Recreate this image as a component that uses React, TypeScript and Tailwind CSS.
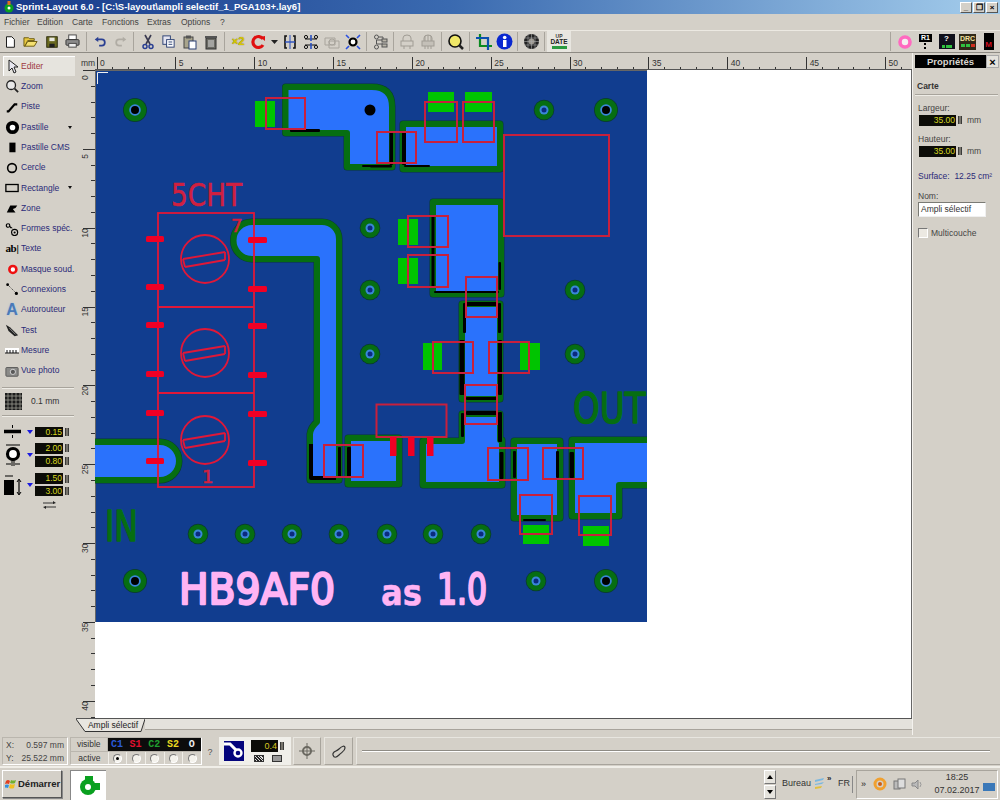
import React from "react";

const GREEN = "#066e12";
const BLUE = "#2a72fc";
const RED = "#c8203c";

function S({ children, w = 16, h = 16, vb = "0 0 16 16" }: { children: React.ReactNode; w?: number; h?: number; vb?: string }) {
  return (
    <svg width={w} height={h} viewBox={vb} className="block shrink-0">
      {children}
    </svg>
  );
}

function Sep({ w = 6 }: { w?: number }) {
  return (
    <div className="flex justify-center shrink-0" style={{ width: w }}>
      <div className="w-[2px] h-[19px] my-[1px] border-l border-[#a8a49c] border-r-white" />
    </div>
  );
}

function T({ w = 21, children, cls = "" }: { w?: number; children: React.ReactNode; cls?: string }) {
  return (
    <div className={"h-[21px] flex items-center justify-center shrink-0 " + cls} style={{ width: w }}>
      {children}
    </div>
  );
}

function Toolbar() {
  return (
    <div className="h-[23px] flex items-center bg-[#d4d0c8] border-t border-[#ece9e2] border-b border-b-[#8e8b84]">
      <T w={19}><S w={14} h={14}><path d="M4 2h6l3 3v9H4z" fill="#fff" stroke="#000" /></S></T>
      <T w={22}><S w={15} h={15}><path d="M1 13V4h5l1 1h5v2H5l-3 6z" fill="#e8c840" stroke="#6a5a10" /><path d="M2 13l3-5h10l-3 5z" fill="#f4e070" stroke="#6a5a10" /></S></T>
      <T><S w={14} h={14}><rect x="2" y="2" width="12" height="12" fill="#6a6a20" stroke="#202000" /><rect x="5" y="3" width="6" height="4" fill="#e8e8e0" /><rect x="5" y="10" width="6" height="4" fill="#202020" /></S></T>
      <T><S w={15} h={15}><rect x="4" y="1" width="8" height="5" fill="#fff" stroke="#444" /><rect x="1" y="6" width="14" height="6" rx="1" fill="#8a8a8a" stroke="#333" /><rect x="4" y="10" width="8" height="4" fill="#eee" stroke="#444" /></S></T>
      <Sep w={7} />
      <T w={20}><S w={14} h={14}><path d="M5 5h5a3 3 0 0 1 0 7H7" fill="none" stroke="#2a3f92" strokeWidth="2" /><path d="M6 2L2 5l4 3z" fill="#2a3f92" /></S></T>
      <T><S w={14} h={14}><path d="M11 5H6a3 3 0 0 0 0 7h3" fill="none" stroke="#b0aca4" strokeWidth="2" /><path d="M10 2l4 3-4 3z" fill="#b0aca4" /></S></T>
      <Sep />
      <T><S><path d="M5 1l5 9M11 1L6 10" stroke="#3a3a50" strokeWidth="1.6" /><circle cx="5" cy="12.5" r="2" fill="none" stroke="#2a3f92" strokeWidth="1.5" /><circle cx="11" cy="12.5" r="2" fill="none" stroke="#2a3f92" strokeWidth="1.5" /></S></T>
      <T><S w={15} h={15}><rect x="2" y="2" width="8" height="9" fill="#e4e4f0" stroke="#2a3f72" /><rect x="6" y="6" width="8" height="8" fill="#fff" stroke="#2a3f72" /><path d="M8 8.500h4M8 11h4" stroke="#2a3f72" /></S></T>
      <T><S><rect x="2" y="3" width="9" height="11" fill="#a8a48c" stroke="#444" /><rect x="4" y="1.500" width="5" height="3" fill="#555" /><rect x="7" y="7" width="7" height="8" fill="#fff" stroke="#2a3f72" /></S></T>
      <T><S><rect x="3" y="4" width="10" height="11" fill="#6a6a64" stroke="#333" /><rect x="2" y="2" width="12" height="2" fill="#555" /><path d="M6 6v7M8 6v7M10 6v7" stroke="#ddd" /></S></T>
      <Sep w={7} />
      <T w={20}><span className="text-[11px] font-bold text-[#d8c800] leading-none [text-shadow:0_0_1px_#706000]">×2</span></T>
      <T><S><path d="M12 5a5.500 5.500 0 1 0 0 6" fill="none" stroke="#e01010" strokeWidth="3.200" /><path d="M9 3l5-1v5z" fill="#e01010" /></S></T>
      <T w={10}><S w={7} h={4} vb="0 0 7 4"><path d="M0 0h7L3.500 4z" fill="#222" /></S></T>
      <T><S><path d="M5 2H3v12h2M11 2h2v12h-2" fill="none" stroke="#111" strokeWidth="1.600" /><path d="M8 1v14" stroke="#2a50c0" /><path d="M3 8h10" stroke="#2a50c0" strokeWidth="1.400" /></S></T>
      <T><S><path d="M2 5h12M2 11h12" stroke="#111" strokeWidth="1.200" /><path d="M8 1v6M8 9v6" stroke="#2a50c0" strokeWidth="1.600" /><circle cx="3" cy="3" r="1.600" fill="none" stroke="#111" /><circle cx="13" cy="3" r="1.600" fill="none" stroke="#111" /><circle cx="3" cy="13" r="1.600" fill="none" stroke="#111" /><circle cx="13" cy="13" r="1.600" fill="none" stroke="#111" /></S></T>
      <T><S><path d="M1 4h10v7H1zM5 7h10v7H5z" fill="none" stroke="#a8a49c" /><circle cx="8" cy="8" r="3" fill="none" stroke="#a8a49c" /></S></T>
      <T><S><circle cx="8" cy="8" r="3.500" fill="#fff" stroke="#000" strokeWidth="2.200" /><path d="M1 1l3 3M15 1l-3 3M1 15l3-3M15 15l-3-3" stroke="#2a50e0" strokeWidth="1.600" /></S></T>
      <Sep w={7} />
      <T><S><circle cx="3.500" cy="3" r="2" fill="none" stroke="#555" /><circle cx="3.500" cy="13" r="2" fill="none" stroke="#555" /><path d="M6 3h4v3H3.500v4H10" fill="none" stroke="#555" /><rect x="9" y="5" width="5" height="3" fill="#b8b4a8" stroke="#555" /><rect x="9" y="10" width="5" height="3" fill="#b8b4a8" stroke="#555" /></S></T>
      <Sep />
      <T w={20}><S><path d="M4 7V4a4 3 0 0 1 8 0v3" fill="none" stroke="#a09c94" /><rect x="2" y="7" width="12" height="5" fill="none" stroke="#a09c94" /><path d="M5 12v3M11 12v3" stroke="#a09c94" /></S></T>
      <T><S><path d="M4 7V4a4 3 0 0 1 8 0v3" fill="none" stroke="#a09c94" /><rect x="2" y="7" width="12" height="5" fill="#c4c0b8" stroke="#a09c94" /><path d="M5 12v3M8 12v3M11 12v3M5 2v5M8 1v6M11 2v5" stroke="#a09c94" /></S></T>
      <Sep w={7} />
      <T w={22}><S w={18} h={18} vb="0 0 18 18"><circle cx="8" cy="8" r="6" fill="#f0e868" stroke="#111" strokeWidth="1.600" /><path d="M12 12l4 4" stroke="#222" strokeWidth="2.500" /></S></T>
      <Sep />
      <T><S w={18} h={18} vb="0 0 18 18"><path d="M5 1v12h12" fill="none" stroke="#0a8a20" strokeWidth="2.200" /><path d="M1 5h12v12" fill="none" stroke="#0a50b0" strokeWidth="2.200" /></S></T>
      <T><S w={17} h={17} vb="0 0 17 17"><circle cx="8.500" cy="8.500" r="8" fill="#0a28d0" /><rect x="7" y="7" width="3.500" height="7" fill="#fff" /><circle cx="8.700" cy="4.500" r="1.800" fill="#fff" /></S></T>
      <Sep />
      <T><S w={17} h={17} vb="0 0 17 17"><circle cx="8.500" cy="8.500" r="7.500" fill="#222" /><circle cx="8.500" cy="8.500" r="3" fill="#9c9890" /><path d="M1 5h15M1 8.500h15M1 12h15M5 1v15M8.500 1v15M12 1v15" stroke="#aaa" strokeWidth=".6" /></S></T>
      <Sep w={5} />
      <div className="w-[24px] h-[21px] bg-[#e8e6e0] flex flex-col items-center justify-center shrink-0 leading-none">
        <span className="text-[5px] font-bold text-[#333]">UP</span>
        <span className="text-[6.5px] font-bold text-[#222]">DATE</span>
        <span className="w-[15px] h-[3px] mt-[1px] bg-[#2a9a40]" />
      </div>
      <div className="ml-auto" />
      <Sep />
      <T><S w={14} h={14} vb="0 0 14 14"><circle cx="7" cy="7" r="5" fill="#f4f0f0" stroke="#ff6ac0" strokeWidth="3.600" /></S></T>
      <T>
        <div className="flex flex-col items-center">
          <span className="bg-black text-white text-[7px] font-bold leading-[8px] px-[2px]">R1</span>
          <span className="w-[2px] h-[6px] border-y-2 border-black mt-[1px]" />
        </div>
      </T>
      <T>
        <div className="w-[16px] h-[15px] bg-[#10101c] flex flex-col items-center leading-none">
          <span className="text-white text-[8px] font-bold leading-[10px]">?</span>
          <span className="flex gap-[1px] items-center mt-[1px]"><span className="w-[3px] h-[3px] bg-[#30c040]" /><span className="w-[6px] h-[3px] bg-[#30c040]" /></span>
        </div>
      </T>
      <T>
        <div className="w-[17px] h-[16px] bg-[#302818] flex flex-col items-center leading-none">
          <span className="text-[#f0e0a0] text-[7px] font-bold leading-[9px]">DRC</span>
          <span className="flex gap-[1px] items-center mt-[1px]"><span className="w-[4px] h-[3px] bg-[#30c040]" /><span className="w-[4px] h-[3px] bg-[#30c040]" /><span className="w-[4px] h-[3px] bg-[#d03020]" /></span>
        </div>
      </T>
      <T>
        <div className="w-[10px] h-[17px] bg-black flex items-end justify-center">
          <span className="text-[#d01020] text-[8px] font-bold leading-[11px]">M</span>
        </div>
      </T>
      <div className="w-[1px]" />
    </div>
  );
}

const leftItems: { label: string; arrow?: boolean; icon: React.ReactNode }[] = [
  { label: "Zoom", icon: <S w={14} h={14}><circle cx="7" cy="7" r="5" fill="#e8e8e8" stroke="#222" strokeWidth="1.500" /><path d="M11 11l4 4" stroke="#222" strokeWidth="2" /></S> },
  { label: "Piste", icon: <S w={14} h={14}><path d="M2 13h2l7-8h3" fill="none" stroke="#000" strokeWidth="2.500" /></S> },
  { label: "Pastille", arrow: true, icon: <S w={15} h={15}><circle cx="8" cy="8" r="5" fill="#fff" stroke="#000" strokeWidth="4" /></S> },
  { label: "Pastille CMS", icon: <S w={14} h={14}><rect x="5" y="3" width="7" height="11" fill="#000" /></S> },
  { label: "Cercle", icon: <S w={14} h={14}><circle cx="8" cy="8" r="5" fill="none" stroke="#000" strokeWidth="1.800" /></S> },
  { label: "Rectangle", arrow: true, icon: <S w={14} h={14}><rect x="1" y="4" width="14" height="8" fill="none" stroke="#000" strokeWidth="1.500" /></S> },
  { label: "Zone", icon: <S w={14} h={14}><path d="M2 13l4-8h8l-2 3-3 1 3 4z" fill="#000" /></S> },
  { label: "Formes spéc.", icon: <S w={14} h={14}><circle cx="3.500" cy="4" r="2" fill="none" stroke="#000" strokeWidth="1.300" /><circle cx="11" cy="12" r="3.500" fill="none" stroke="#000" strokeWidth="1.300" /><circle cx="11" cy="12" r="1.200" fill="#000" /><path d="M5 4l4 3h-3z" fill="#000" /></S> },
  { label: "Texte", icon: <span className="font-['Liberation_Serif',serif] font-bold text-[11px] leading-none text-black tracking-[-.3px]">ab|</span> },
  { label: "Masque soud.", icon: <S w={14} h={14}><circle cx="9" cy="8.500" r="4" fill="#fff" stroke="#ee1010" strokeWidth="3" /></S> },
  { label: "Connexions", icon: <S w={14} h={14}><circle cx="3" cy="3" r="1.600" fill="#000" /><circle cx="13" cy="13" r="1.800" fill="#000" /><path d="M3 3l10 10" stroke="#000" strokeDasharray="1 1.500" /></S> },
  { label: "Autorouteur", icon: <span className="text-[16px] font-bold text-[#4a7ab8] leading-none [text-shadow:0_0_2px_#a0c0e0]">A</span> },
  { label: "Test", icon: <S w={14} h={14}><path d="M1 2l5 3 9 9-4 1-7-6z" fill="#222" /><path d="M5 6l7 7" stroke="#ddd" strokeWidth=".6" /></S> },
  { label: "Mesure", icon: <S><rect x="1" y="6" width="14" height="5" fill="#fff" /><path d="M1 11h14M3 11V8M6 11V8M9 11V8M12 11V8" stroke="#111" /></S> },
  { label: "Vue photo", icon: <S w={14} h={14}><rect x="1" y="4" width="14" height="10" rx="1" fill="#8a8a88" stroke="#555" /><circle cx="9" cy="9" r="3" fill="#5a5a5a" stroke="#ddd" /></S> },
];

function Num({ v }: { v: string }) {
  return (
    <div className="flex items-center shrink-0">
      <div className="w-[28px] h-[10.500px] bg-[#0c0c08] text-[#d8d820] text-[8.500px] leading-[10.500px] text-right pr-[1px]">{v}</div>
      <Spin />
    </div>
  );
}

function Spin() {
  return <div className="ml-[2px] w-[4px] h-[8px] bg-[#77746c] border-x border-[#3a3a38]" />;
}

function Tri() {
  return <div className="w-0 h-0 border-x-[3px] border-x-transparent border-t-[4px] border-t-[#1a1ae0]" />;
}

function LeftBar() {
  return (
    <div className="w-[76px] shrink-0 pt-[3px] flex flex-col">
      <div className="ml-[3px] w-[72px] h-[20.300px] bg-[#e6e4de] flex items-center border-l border-t border-white">
        <div className="w-[17px] flex justify-center"><S w={13} h={15} vb="0 0 13 15"><path d="M3 1v11l3-3 2 5 2-1-2-5h4z" fill="#e8e8f0" stroke="#222" /></S></div>
        <span className="text-[8.500px] text-[#a03840]">Editer</span>
      </div>
      {leftItems.map((it) => (
        <div key={it.label} className="ml-[3px] w-[72px] h-[20.300px] flex items-center relative">
          <div className="w-[18px] flex justify-center">{it.icon}</div>
          <span className="text-[8.500px] text-[#2a2a78] whitespace-nowrap">{it.label}</span>
          {it.arrow && <div className="ml-auto mr-[3px] w-0 h-0 border-x-[2.500px] border-x-transparent border-t-[3px] border-t-[#111]" />}
        </div>
      ))}
      <div className="mx-[2px] mt-[6px] h-[2px] border-t border-[#a8a49c] border-b border-b-[#eeece6]" />
      <div className="flex items-center h-[26px] pl-[5px]">
        <div className="w-[17px] h-[17px] bg-[linear-gradient(#1b1b1b_0_0)] overflow-hidden">
          <S w={17} h={17} vb="0 0 17 17">
            <path d="M3 0v17M7 0v17M11 0v17M15 0v17M0 3h17M0 7h17M0 11h17M0 15h17" stroke="#9a9a90" strokeWidth=".8" />
          </S>
        </div>
        <span className="ml-[9px] text-[8.500px] text-[#333]">0.1 mm</span>
      </div>
      <div className="mx-[2px] h-[2px] border-t border-[#a8a49c] border-b border-b-[#eeece6]" />
      <div className="flex items-center mt-[8.500px] h-[13px]">
        <div className="w-[24px] pl-[4px]"><S w={17} h={13} vb="0 0 17 13"><path d="M0 6.500h17" stroke="#000" strokeWidth="3.500" strokeLinecap="round" /><path d="M8.500 0v3M8.500 10v3" stroke="#000" /></S></div>
        <div className="w-[11px] flex justify-center"><Tri /></div>
        <Num v="0.15" />
      </div>
      <div className="flex items-center mt-[4px] h-[25px]">
        <div className="w-[24px] pl-[3px]"><S w={20} h={25} vb="0 0 20 25"><path d="M3 3h14M3 22h5M12 22h5" stroke="#000" /><circle cx="10" cy="12" r="5.500" fill="#fff" stroke="#000" strokeWidth="3.200" /><path d="M9 17v7M11 17v7" stroke="#000" /></S></div>
        <div className="w-[11px] flex justify-center"><Tri /></div>
        <div className="flex flex-col gap-[2.500px]"><Num v="2.00" /><Num v="0.80" /></div>
      </div>
      <div className="flex items-center mt-[6px] h-[23px]">
        <div className="w-[24px] pl-[4px]"><S w={19} h={23} vb="0 0 19 23"><rect x="0" y="7" width="10" height="15" fill="#000" /><path d="M1 3h8M15 7v14" stroke="#000" strokeWidth="1.200" /><path d="M13 9l2-3 2 3M13 19l2 3 2-3" fill="none" stroke="#000" /></S></div>
        <div className="w-[11px] flex justify-center"><Tri /></div>
        <div className="flex flex-col gap-[2px]"><Num v="1.50" /><Num v="3.00" /></div>
      </div>
      <div className="pl-[42px] mt-[5px]"><S w={15} h={8} vb="0 0 15 8"><path d="M1 2h11M3 6h11" stroke="#333" /><path d="M11 0l3 2-3 1zM4 5L1 6l3 2z" fill="#222" /></S></div>
    </div>
  );
}

const MM = 15.77;

function TopRuler() {
  const ticks = Array.from({ length: 52 }, (_, i) => i);
  return (
    <svg width={836} height={17} className="block">
      <text x="5" y="13" fontSize="8.500" fontFamily="Liberation Sans" fill="#333">mm</text>
      {ticks.map((i) => {
        const x = Math.round(20.5 + i * MM) + 0.5;
        return <path key={i} d={i % 5 === 0 ? `M${x} 4V17` : `M${x} 14V17`} stroke="#333" />;
      })}
      {ticks.filter((i) => i % 5 === 0).map((i) => (
        <text key={i} x={24 + i * MM} y="13" fontSize="8.500" fontFamily="Liberation Sans" fill="#333">{i}</text>
      ))}
      <path d="M19 16.500H836" stroke="#555" />
    </svg>
  );
}

function LeftRuler() {
  const ticks = Array.from({ length: 42 }, (_, i) => i);
  return (
    <svg width={19} height={648} className="block shrink-0">
      {ticks.map((i) => {
        const y = Math.round(i * MM) + 0.5;
        return <path key={i} d={i % 5 === 0 ? `M7 ${y}H19` : `M15 ${y}H19`} stroke="#333" />;
      })}
      {ticks.filter((i) => i % 5 === 0).map((i) => {
        const y = i * MM + 10;
        return (
          <text key={i} transform={`translate(12 ${y}) rotate(-90)`} fontSize="8.500" fontFamily="Liberation Sans" fill="#333">{i}</text>
        );
      })}
    </svg>
  );
}

function Track({ d }: { d: string }) {
  return (
    <g strokeLinejoin="round">
      <path d={d} fill="none" stroke="#0a3a30" strokeWidth="7" />
      <path d={d} fill={BLUE} stroke={GREEN} strokeWidth="6" />
    </g>
  );
}

function Via({ x, y, big }: { x: number; y: number; big?: boolean }) {
  return (
    <g>
      <circle cx={x} cy={y} r={big ? 12 : 10.300} fill="#0a3a30" />
      <circle cx={x} cy={y} r={big ? 11.300 : 9.600} fill={GREEN} />
      <circle cx={x} cy={y} r={big ? 5.800 : 4.500} fill="#3a86d8" />
      <circle cx={x} cy={y} r={big ? 4 : 2.500} fill={big ? "#000" : "#0a2a80"} />
    </g>
  );
}

function RR({ x, y, x2, y2 }: { x: number; y: number; x2: number; y2: number }) {
  return <rect x={x} y={y} width={x2 - x} height={y2 - y} fill="none" stroke={RED} strokeWidth="2" />;
}

function Pot({ cy }: { cy: number }) {
  return (
    <g fill="none" stroke="#e01838" strokeWidth="1.800">
      <circle cx="205" cy={cy} r="24" />
      <path d={`M183 ${cy}L225 ${cy - 7}M185 ${cy + 8}L225 ${cy + 1}`} />
      <path d={`M183 ${cy}L185 ${cy + 8}M225 ${cy - 7}L225 ${cy + 1}`} />
    </g>
  );
}

function Pcb() {
  const bars: [number, number, number, number][] = [
    [290, 129, 30, 3], [362, 165, 14, 2], [389.5, 131, 3.5, 34], [402, 131, 4, 34], [370, 165, 22, 2.5], [404, 165, 26, 2],
    [431.5, 216, 3, 72], [498.5, 262, 2.5, 28], [434, 291, 65, 2], [466, 302, 31, 4], [463, 303, 3, 30], [498, 303, 3, 30],
    [459.5, 340, 5, 55], [498, 340, 4, 55], [466, 397, 31, 3], [466, 411, 31, 4], [461, 413, 3, 24], [498, 412, 4, 30],
    [499.5, 452, 4, 27], [513, 451, 3, 27], [556, 451, 3, 27], [569.5, 452, 4.5, 26], [523, 519, 23, 2], [347, 447, 4, 30], [338, 447, 3, 30],
  ];
  const pads: [number, number, number, number][] = [
    [255, 101, 20, 26], [428, 92, 26, 20], [465, 92, 27, 20], [398, 219, 20, 26], [398, 258, 20, 26],
    [423, 343, 19, 27], [520, 343, 20, 27], [523, 525, 26, 19], [583, 526, 26, 20],
  ];
  const lp = [239, 287, 325, 374, 413, 461];
  const rp = [240, 289, 326, 375, 414, 463];
  return (
    <svg width={552} height={552} viewBox="95 70 552 552" className="block shrink-0">
      <rect x="95" y="70" width="552" height="552" fill="#113d8f" />
      <path d="M95 70.500H647M95.500 70V622" stroke="#666" />
      <path d="M97.500 84V72.500H108" fill="none" stroke="#f0f0f0" />

      {pads.map(([x, y, w, h], i) => <rect key={i} x={x} y={y} width={w} height={h} fill="#00c400" />)}

      <Track d="M285.500 87L372 87Q392 87 392 107L392 167L347 167L347 133L285.500 133Z" />
      <Track d="M403 124L500 124L500 169L403 169Z" />
      <Track d="M433 202L501 202L501 294L433 294Z" />
      <Track d="M462 304L500 304L500 399L462 399Z" />
      <Track d="M462 414L500 414L500 440L502 440L502 485L423 485L423 441L462 441Z" />
      <Track d="M348 438L399 438L399 484L348 484Z" />
      <Track d="M514 441L560 441L560 518L514 518Z" />
      <Track d="M572 440L655 440L655 485L619 485L619 516L572 516Z" />
      <Track d="M252 222L322 222A17 17 0 0 1 339 239L339 480L310 480L310 434Q311 427 317 422L317 259L252 259A18.500 18.500 0 0 1 252 222Z" />
      <Track d="M85 442L160 442A19 19 0 0 1 160 480L85 480Z" />

      {bars.map(([x, y, w, h], i) => <rect key={i} x={x} y={y} width={w} height={h} rx="1" fill="#000" />)}
      <path d="M311 444V478H336" fill="none" stroke="#000" strokeWidth="4" strokeLinejoin="round" />
      <circle cx="370" cy="110" r="5.500" fill="#000" />

      {[[135, 110], [606, 110], [135, 581], [606, 581]].map(([x, y]) => <Via key={x + "-" + y} x={x} y={y} big />)}
      {[[544, 110], [536, 581], [370, 228], [370, 290], [575, 290], [370, 354], [575, 354], [198, 534], [245, 534], [292, 534], [339, 534], [387, 534], [433, 534], [481, 534]].map(([x, y]) => <Via key={x + "-" + y} x={x} y={y} />)}

      <g fill="none" stroke="#e01838" strokeWidth="1.800">
        <rect x="158" y="213" width="96" height="274" />
        <path d="M158 307H254M158 393H254" />
      </g>
      {lp.map((y) => <rect key={y} x="146" y={y - 3} width="18" height="6" rx="1.500" fill="#f00024" />)}
      {rp.map((y) => <rect key={y} x="248" y={y - 3} width="19" height="6" rx="1.500" fill="#f00024" />)}
      <Pot cy={259} />
      <Pot cy={353} />
      <Pot cy={440} />
      <g fontFamily="DejaVu Sans" fill="#d02040" stroke="#d02040" strokeWidth="0.600">
        <text x="171" y="206" fontSize="32" textLength="71" lengthAdjust="spacingAndGlyphs">5CHT</text>
        <text x="231" y="232" fontSize="18">7</text>
        <text x="202" y="483" fontSize="18">1</text>
      </g>

      <rect x="376.500" y="404.500" width="70" height="32.500" fill="none" stroke={RED} strokeWidth="2" />
      {[390, 408, 427].map((x) => <rect key={x} x={x} y="437" width="6.500" height="19" fill="#f00024" />)}

      <RR x={266} y={98} x2={305} y2={129} />
      <RR x={425} y={102} x2={457} y2={142} />
      <RR x={463} y={102} x2={494} y2={142} />
      <RR x={377} y={132} x2={416} y2={163} />
      <RR x={504} y={135} x2={609} y2={236} />
      <RR x={408} y={216} x2={448} y2={247} />
      <RR x={408} y={255} x2={448} y2={287} />
      <RR x={466} y={277} x2={497} y2={317} />
      <RR x={433} y={342} x2={473} y2={373} />
      <RR x={489} y={342} x2={529} y2={373} />
      <RR x={465} y={385} x2={497} y2={424} />
      <RR x={324} y={445} x2={363} y2={477} />
      <RR x={488} y={448} x2={528} y2={480} />
      <RR x={543} y={448} x2={583} y2={479} />
      <RR x={520} y={495} x2={552} y2={534} />
      <RR x={579} y={496} x2={611} y2={535} />

      <g fontFamily="DejaVu Sans" fill={GREEN} stroke={GREEN} strokeWidth="1.600" strokeLinejoin="round">
        <text x="105" y="541" fontSize="42" textLength="33" lengthAdjust="spacingAndGlyphs">IN</text>
        <text transform="translate(573 423) scale(0.81 1)" fontSize="42">OUT</text>
      </g>
      <g fill="#ffb4f4" stroke="#ffb4f4" strokeWidth="2.400" strokeLinejoin="round" fontFamily="DejaVu Sans">
        <text x="179" y="604" fontSize="42" textLength="156" lengthAdjust="spacingAndGlyphs">HB9AF0</text>
        <text x="381" y="605" fontSize="35" fontWeight="bold" strokeWidth="0.500" textLength="41" lengthAdjust="spacingAndGlyphs">as</text>
        <text x="437" y="604" fontSize="42" textLength="50" lengthAdjust="spacingAndGlyphs">1.0</text>
      </g>
    </svg>
  );
}

function Field({ v }: { v: string }) {
  return (
    <div className="flex items-center ml-[4px] mt-[1px]">
      <div className="w-[37px] h-[11px] bg-[#0c0c08] text-[#d8d820] text-[8.500px] leading-[11px] text-right pr-[1px]">{v}</div>
      <Spin />
      <span className="ml-[5px] text-[8.500px] text-[#444]">mm</span>
    </div>
  );
}

function Props() {
  return (
    <div className="w-[88px] shrink-0 pl-[2px] pt-[2px] flex flex-col border-l border-[#f4f2ee]">
      <div className="flex h-[13px]">
        <div className="w-[71px] bg-black text-[#d8d6d0] text-[9.500px] font-bold leading-[13px] text-center">Propriétés</div>
        <div className="w-[13px] bg-[#e4e2dc] text-black text-[11px] font-bold leading-[13px] text-center border border-[#aaa]">×</div>
      </div>
      <div className="mt-[12px] ml-[2px] text-[8.500px] font-bold text-[#333] leading-[12px]">Carte</div>
      <div className="mt-[2px] mr-[2px] h-[2px] border-t border-[#a8a49c] border-b border-b-[#eeece6]" />
      <div className="mt-[7px] ml-[3px] text-[8.500px] text-[#444] leading-[10px]">Largeur:</div>
      <Field v="35.00" />
      <div className="mt-[7px] ml-[3px] text-[8.500px] text-[#444] leading-[10px]">Hauteur:</div>
      <Field v="35.00" />
      <div className="mt-[13px] ml-[3px] text-[8.500px] text-[#2a2a78] leading-[10px] whitespace-nowrap">Surface:&nbsp; 12.25 cm²</div>
      <div className="mt-[10px] ml-[3px] text-[8.500px] text-[#444] leading-[10px]">Nom:</div>
      <div className="mt-[1px] ml-[3px] w-[68px] h-[15px] bg-white border border-[#7a7a74] border-b-[#f0f0f0] border-r-[#f0f0f0] text-[8.500px] text-[#333] leading-[13px] pl-[2px]">Ampli sélectif</div>
      <div className="mt-[10px] ml-[3px] flex items-center">
        <div className="w-[10px] h-[10px] bg-[#ece9e2] border border-[#777] border-b-white border-r-white" />
        <span className="ml-[3px] text-[8.500px] text-[#444]">Multicouche</span>
      </div>
    </div>
  );
}

function Center() {
  return (
    <div className="flex-1 flex flex-col min-w-0">
      <TopRuler />
      <div className="flex h-[648px]">
        <LeftRuler />
        <div className="flex-1 bg-white border-r border-[#666] overflow-hidden"><Pcb /></div>
      </div>
      <div className="h-[17px] border-t border-[#555] flex bg-[#d4d0c8]">
        <S w={10} h={13} vb="0 0 10 13"><path d="M0 0L9 12.500H10V0z" fill="#e8e6e0" /><path d="M0 0L9 12.500H10" fill="none" stroke="#333" /></S>
        <div className="w-[54px] h-[13px] bg-[#e8e6e0] border-b border-[#333] flex items-center justify-center">
          <span className="text-[8.500px] text-[#222] leading-none whitespace-nowrap">Ampli sélectif</span>
        </div>
        <S w={5} h={13} vb="0 0 5 13"><path d="M0 0H5L1 12.500H0z" fill="#e8e6e0" /><path d="M5 0L1 12.500H0" fill="none" stroke="#333" /></S>
        <div className="flex-1 h-[11px] bg-[#e4e2dc] border-b border-[#a8a49c]" />
      </div>
    </div>
  );
}

function Radio({ on }: { on?: boolean }) {
  return (
    <div className="w-[18.700px] flex justify-center items-center border-l border-[#f0eee8]">
      <div className="w-[9px] h-[9px] rounded-full bg-[#f4f2ec] border border-[#777] border-b-white border-r-white flex items-center justify-center">
        {on && <div className="w-[3px] h-[3px] rounded-full bg-black" />}
      </div>
    </div>
  );
}

function Status() {
  const layers: [string, string][] = [["C1", "#2a5ad8"], ["S1", "#e01030"], ["C2", "#20a030"], ["S2", "#e8d820"], ["O", "#f0f0f0"]];
  return (
    <div className="h-[31px] flex bg-[#d4d0c8] pl-[2px] pt-[2px] pb-[1px] gap-[2px] items-stretch">
      <div className="w-[66px] border border-[#bab6ae] border-r-white border-b-white text-[8.500px] text-[#444] leading-[13px] pt-[1px] px-[3px]">
        <div className="flex justify-between"><span>X:</span><span>0.597 mm</span></div>
        <div className="flex justify-between"><span>Y:</span><span>25.522 mm</span></div>
      </div>
      <div className="flex flex-col w-[132px] border border-[#bab6ae] border-r-white border-b-white">
        <div className="flex h-[13px]">
          <div className="w-[37px] text-center text-[8.500px] text-[#333] leading-[13px] border-r border-[#bab6ae]">visible</div>
          <div className="w-[94px] bg-[#0c0c0c] flex items-center font-['Liberation_Mono',monospace] font-bold text-[10px] leading-none">
            {layers.map(([t, c]) => <span key={t} className="w-[18.700px] text-center" style={{ color: c }}>{t}</span>)}
          </div>
        </div>
        <div className="flex h-[13px] border-t border-[#bab6ae]">
          <div className="w-[37px] text-center text-[8.500px] text-[#333] leading-[12px]">active</div>
          <div className="w-[94px] flex"><Radio on /><Radio /><Radio /><Radio /><Radio /></div>
        </div>
      </div>
      <div className="w-[12px] text-[9px] text-[#555] flex items-center justify-center pt-[3px]">?</div>
      <div className="w-[72px] bg-[#f0efea] flex items-center pl-[5px] ml-[1px]">
        <S w={20} h={20} vb="0 0 20 20"><rect width="20" height="20" fill="#04047c" /><path d="M0 3h6l7 7" fill="none" stroke="#fff" strokeWidth="3" /><circle cx="14" cy="12" r="3.500" fill="#04047c" stroke="#fff" strokeWidth="2.400" /></S>
        <div className="ml-[7px] flex flex-col gap-[3px]">
          <div className="flex items-center">
            <div className="w-[27px] h-[12px] bg-[#0c0c08] text-[#d8c820] text-[9px] leading-[12px] text-right pr-[1px]">0.4</div>
            <Spin />
          </div>
          <div className="flex gap-[8px] pl-[3px]">
            <div className="w-[10px] h-[7px] bg-[repeating-linear-gradient(45deg,#222_0_1px,#ddd_1px_2px)] border border-[#333]" />
            <div className="w-[10px] h-[7px] bg-[#999] border border-[#333]" />
          </div>
        </div>
      </div>
      <div className="w-[28px] border border-[#e8e6e0] border-r-[#a8a49c] border-b-[#a8a49c] flex items-center justify-center">
        <S><circle cx="8" cy="8" r="4" fill="#d4d0c8" stroke="#6a6860" strokeWidth="2" /><path d="M8 0v16M0 8h16" stroke="#6a6860" /></S>
      </div>
      <div className="w-[29px] ml-[1px] border border-[#e8e6e0] border-r-[#a8a49c] border-b-[#a8a49c] flex items-center justify-center">
        <S><path d="M2 12c-1-4 3-3 6-6s6-4 6-1-3 4-6 7-5 3-6 0z" fill="none" stroke="#333" strokeWidth="1.200" /></S>
      </div>
      <div className="flex-1 ml-[1px] border border-[#e8e6e0] border-r-0 border-b-[#a8a49c] flex items-center pl-[5px] pr-[10px]">
        <div className="w-full h-[2px] border-t border-[#8e8b84] border-b border-b-white" />
      </div>
    </div>
  );
}

function Taskbar() {
  return (
    <div className="h-[34px] flex bg-[#d4d0c8] border-t-2 border-[#f0eee8] items-center pl-[2px]">
      <div className="w-[60px] h-[28px] border border-[#fff] border-r-[#555] border-b-[#555] bg-[#d4d0c8] flex items-center pl-[2px] shadow-[1px_1px_0_#888]">
        <S w={12} h={12} vb="0 0 12 12">
          <path d="M1 3q2-2 4 0l-1 3q-2-1-4 0z" fill="#e04020" />
          <path d="M6 2q2 1 5 0l-1 3q-2 1-5 0z" fill="#70b030" />
          <path d="M0 7q2-1 4 0l-1 3q-2-1-4 0z" fill="#3090e0" />
          <path d="M5 6q2 1 5 0l-1 4q-2 1-5 0z" fill="#f0c020" />
        </S>
        <span className="ml-[1px] text-[9.500px] font-bold text-[#222] leading-none">Démarrer</span>
      </div>
      <div className="ml-[8px] w-[36px] h-[31px] mt-[2px] bg-white border-l border-t border-[#888] flex items-center justify-center">
        <S w={24} h={24} vb="0 0 24 24"><rect x="8" y="2" width="8" height="8" fill="#0aa020" /><rect x="14" y="9" width="9" height="7" fill="#0aa020" /><circle cx="11" cy="13" r="8" fill="#0aa020" /><circle cx="11" cy="13" r="3" fill="#fff" /></S>
      </div>
      <div className="ml-auto flex items-center">
        <div className="flex flex-col gap-[1px]">
          <div className="w-[12px] h-[14px] bg-[#e6e4de] border border-[#fff] border-r-[#777] border-b-[#777] flex items-center justify-center"><div className="w-0 h-0 border-x-[3px] border-x-transparent border-b-[4px] border-b-black" /></div>
          <div className="w-[12px] h-[14px] bg-[#e6e4de] border border-[#fff] border-r-[#777] border-b-[#777] flex items-center justify-center"><div className="w-0 h-0 border-x-[3px] border-x-transparent border-t-[4px] border-t-black" /></div>
        </div>
        <span className="ml-[6px] text-[9px] text-[#333] w-[32px]">Bureau</span>
        <S w={12} h={14} vb="0 0 12 14"><path d="M1 3l9-2-1 2-8 2zM1 7l9-2-2 2-7 1z" fill="#7ab8e0" /><path d="M1 10l7-1-1 2-6 1z" fill="#e0c040" /></S>
        <span className="ml-[1px] -mt-[10px] text-[8px] font-bold text-[#222] w-[10px] leading-none">»</span>
        <span className="ml-[1px] text-[9px] text-[#333] w-[13px]">FR</span>
        <div className="ml-[1px] w-[1px] h-[17px] bg-[#888]" />
        <div className="ml-[3px] w-[142px] h-[29px] border border-[#a8a49c] border-r-white border-b-white flex items-center pl-[4px]">
          <span className="text-[9px] text-[#222] w-[12px] leading-none">»</span>
          <S w={14} h={14} vb="0 0 14 14"><circle cx="7" cy="7" r="5" fill="none" stroke="#f0a030" strokeWidth="3" /><circle cx="7" cy="7" r="2" fill="#d06010" /></S>
          <div className="ml-[6px]"><S w={13} h={13} vb="0 0 13 13"><rect x="1" y="3" width="6" height="8" fill="#bbb" stroke="#777" /><rect x="5" y="1" width="7" height="9" fill="#ddd" stroke="#777" /></S></div>
          <div className="ml-[5px]"><S w={12} h={13} vb="0 0 12 13"><path d="M1 5h3l3-3v9L4 8H1z" fill="#bbb" stroke="#888" /><path d="M9 4q2 2.500 0 5" fill="none" stroke="#999" /></S></div>
          <div className="ml-[12px] w-[44px] flex flex-col items-center text-[9px] text-[#333] leading-[13px]"><span>18:25</span><span>07.02.2017</span></div>
          <div className="ml-[4px] w-[12px] h-[8px] bg-[#3a78b8] mt-[6px]" />
        </div>
        <div className="w-[2px]" />
      </div>
    </div>
  );
}

export default function App() {
  const menu: [string, number][] = [["Fichier", 33], ["Edition", 35], ["Carte", 30], ["Fonctions", 45], ["Extras", 34], ["Options", 39], ["?", 10]];
  return (
    <div className="w-[1000px] h-[800px] overflow-hidden flex flex-col bg-[#d4d0c8] font-['Liberation_Sans',Arial,sans-serif]">
      <div className="h-[14px] flex items-center bg-[linear-gradient(90deg,#183a8a,#3a6ab0_45%,#a4cdec)] pl-[3px] shrink-0">
        <S w={12} h={12} vb="0 0 12 12"><circle cx="6" cy="7" r="4.500" fill="#0aa020" /><rect x="4.500" y="0" width="3" height="4" fill="#e07020" /><circle cx="6" cy="7" r="1.500" fill="#fff" /></S>
        <span className="ml-[1px] text-[9.500px] font-bold text-white leading-none whitespace-nowrap">Sprint-Layout 6.0 - [C:\S-layout\ampli selectif_1_PGA103+.lay6]</span>
        <div className="ml-auto flex gap-[1px] mr-[2px]">
          {["_", "❐", "×"].map((b) => (
            <div key={b} className="w-[12px] h-[11px] bg-[#d4d0c8] border border-white border-r-[#555] border-b-[#555] text-[8px] font-bold text-black leading-[9px] text-center">{b}</div>
          ))}
        </div>
      </div>
      <div className="h-[16px] flex items-center pl-[4px] shrink-0">
        {menu.map(([m, w]) => (
          <span key={m} className="text-[8.500px] text-[#444] leading-none" style={{ width: w }}>{m}</span>
        ))}
      </div>
      <Toolbar />
      <div className="h-[682px] flex shrink-0">
        <LeftBar />
        <Center />
        <Props />
      </div>
      <Status />
      <Taskbar />
    </div>
  );
}
